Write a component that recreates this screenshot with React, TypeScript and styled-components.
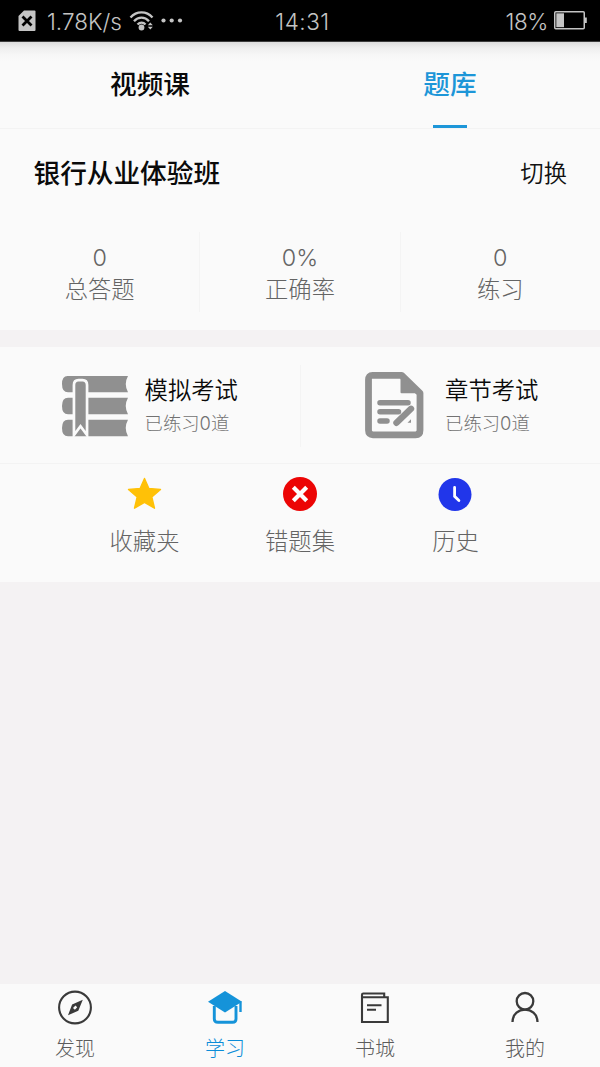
import React from "react";
import styled, { createGlobalStyle } from "styled-components";

const GlobalStyle = createGlobalStyle`
  * { box-sizing: border-box; }
  body {
    margin: 0;
    background: #f4f2f3;
    font-family: "Noto Sans CJK SC", "Noto Sans", sans-serif;
    font-weight: 300;
  }
  svg { display: block; flex: none; }
`;

const Screen = styled.div`
  width: 600px;
  height: 1067px;
  display: flex;
  flex-direction: column;
  background: #f4f2f3;
`;

const StatusBar = styled.header`
  height: 42px;
  flex: none;
  display: grid;
  grid-template-columns: 1fr auto 1fr;
  align-items: center;
  padding: 0 13px 0 18px;
  background: #000;
  border-bottom: 1px solid #3c3c3c;
  color: #c4c4c4;
`;

const StatusGroup = styled.div<{ $end?: boolean }>`
  display: flex;
  align-items: center;
  gap: 6px;
  justify-content: ${(p) => (p.$end ? "flex-end" : "flex-start")};
`;

const StatusText = styled.span<{ $spacing?: number }>`
  font-family: Inter, sans-serif;
  font-size: 22.5px;
  line-height: 39px;
  padding-top: 2px;
  letter-spacing: ${(p) => p.$spacing ?? 0}px;
`;

const NetSpeed = styled(StatusText)`
  width: 76px;
  margin-left: 5px;
  white-space: nowrap;
`;

const Tabs = styled.nav`
  height: 87px;
  flex: none;
  display: flex;
  background: linear-gradient(#dcdcdc 0, #eeeeee 6px, #f7f7f7 13px, #fafafa 20px);
  border-bottom: 1px solid #f3f3f3;
`;

const Tab = styled.button<{ $active?: boolean }>`
  flex: 1;
  border: 0;
  padding: 21px 0 0;
  background: none;
  display: flex;
  flex-direction: column;
  align-items: center;
  justify-content: space-between;
  font: 500 26.67px/40px "Noto Sans CJK SC", sans-serif;
  color: ${(p) => (p.$active ? "#1d96d8" : "#0a0a0a")};
  &::after {
    content: "";
    width: 34px;
    height: 3px;
    background: ${(p) => (p.$active ? "#1d96d8" : "transparent")};
  }
`;

const Summary = styled.section`
  height: 201px;
  flex: none;
  background: #fafafa;
`;

const CourseRow = styled.div`
  height: 103px;
  padding: 23px 33px 0 33.5px;
  display: flex;
  justify-content: space-between;
`;

const CourseTitle = styled.h1`
  margin: 0;
  font-size: 26.67px;
  font-weight: 500;
  line-height: 40px;
  color: #0a0a0a;
`;

const Switch = styled.span`
  font-size: 23.33px;
  font-weight: 350;
  line-height: 40px;
  color: #111;
`;

const Stats = styled.div`
  display: flex;
  height: 80px;
`;

const Stat = styled.div`
  flex: 1;
  display: flex;
  flex-direction: column;
  align-items: center;
  padding-top: 10px;
  font-size: 23.33px;
  line-height: 31px;
  color: #646464;
  & + & { border-left: 1px solid #f4f4f4; }
`;

const Digits = styled.span`
  font-family: Inter, sans-serif;
`;

const Exams = styled.section`
  height: 117px;
  flex: none;
  margin-top: 17px;
  padding: 18px 0 16px;
  display: flex;
  background: #fafafa;
  border-bottom: 1px solid #f3f3f3;
`;

const Exam = styled.div`
  flex: 1;
  display: flex;
  justify-content: center;
  padding-top: 6px;
  gap: 15px;
  & + & { border-left: 1px solid #f4f4f4; }
`;

const ExamText = styled.div`
  display: flex;
  flex-direction: column;
`;

const ExamName = styled.span`
  font-size: 23.33px;
  font-weight: 350;
  line-height: 36px;
  color: #0a0a0a;
`;

const ExamCount = styled.span`
  font-size: 18.33px;
  line-height: 31px;
  color: #727272;
`;

const Shortcuts = styled.section`
  height: 118px;
  flex: none;
  display: grid;
  grid-template-columns: repeat(3, 155.5px);
  justify-content: center;
  background: #fafafa;
`;

const Shortcut = styled.div`
  display: flex;
  flex-direction: column;
  align-items: center;
  padding-top: 12px;
  gap: 11px;
  font-size: 23.33px;
  line-height: 34px;
  color: #646464;
`;

const BottomNav = styled.nav`
  margin-top: auto;
  height: 83px;
  flex: none;
  display: flex;
  background: #fafafa;
`;

const NavItem = styled.div<{ $active?: boolean }>`
  flex: 1;
  display: flex;
  flex-direction: column;
  align-items: center;
  padding-top: 5px;
  gap: 6px;
  font-size: 20px;
  line-height: 30px;
  color: ${(p) => (p.$active ? "#0a8cd8" : "#5c5c5c")};
`;

const SimIcon = () => (
  <svg width="18" height="22" viewBox="0 0 18 22">
    <path d="M6 .5H16.500a1 1 0 0 1 1 1V20a1 1 0 0 1-1 1H1.500a1 1 0 0 1-1-1V6z" fill="#c4c4c4" />
    <path d="M4.500 6.500l9 9M13.500 6.500l-9 9" stroke="#000" strokeWidth="2.800" />
  </svg>
);

const WifiIcon = () => (
  <svg width="26" height="20" viewBox="0 0 25 20" fill="none" stroke="#c4c4c4" strokeWidth="2.300">
    <path d="M1 6.500C7-.3 17-.3 23 6.500M4.500 10.200c4.200-4.700 10.800-4.700 15 0M8 13.500c2.500-2.600 5.800-2.600 8 0" />
    <circle cx="12" cy="16.500" r="2.900" fill="#c4c4c4" stroke="none" />
    <path d="M18.300 14.300l2.500-2.800 2.500 2.800zM18.300 15.800l2.500 2.800 2.500-2.800z" fill="#c4c4c4" stroke="none" />
  </svg>
);

const DotsIcon = () => (
  <svg width="22" height="5" viewBox="0 0 22 5" fill="#c4c4c4">
    <circle cx="2.500" cy="2.500" r="2.100" />
    <circle cx="10.700" cy="2.500" r="2.100" />
    <circle cx="19" cy="2.500" r="2.100" />
  </svg>
);

const BatteryIcon = () => (
  <svg width="33" height="19" viewBox="0 0 33 19">
    <rect x=".75" y=".75" width="29.500" height="17" rx="1" fill="none" stroke="#c4c4c4" strokeWidth="1.500" />
    <rect x="2.300" y="2.300" width="7.700" height="13.900" fill="#c4c4c4" />
    <rect x="31" y="6.500" width="1.800" height="5.500" fill="#c4c4c4" />
  </svg>
);

const BooksIcon = () => (
  <svg width="68" height="68" viewBox="1 -3 68 68" fill="#909090">
    <path d="M7 2H67Q62.500 10 67 18.300H7Q1 18.300 1 10T7 2z" />
    <path d="M7 23.700H67Q62.500 31.700 67 40.300H7Q1 40.300 1 32T7 23.700z" />
    <path d="M7 45.700H67Q62.500 53.700 67 62.300H7Q1 62.300 1 54T7 45.700z" />
    <path
      d="M14.300 57V11Q14.300 7.500 17.500 7.500H21.500Q24.700 7.500 24.700 11V57L19.500 50z"
      stroke="#fafafa"
      strokeWidth="5.400"
    />
    <path d="M14.300 57V11Q14.300 7.500 17.500 7.500H21.500Q24.700 7.500 24.700 11V57L19.500 50z" />
  </svg>
);

const PaperIcon = () => (
  <svg width="68" height="68" viewBox="-2.500 -.3 68 68" fill="none" stroke="#909090" strokeLinejoin="round">
    <path d="M8 4H37L55.500 22V59Q55.500 63.500 51 63.500H8.500Q4 63.500 4 59V8.500Q4 4 8 4z" strokeWidth="6.800" />
    <path d="M37 3V21H56z" fill="#909090" strokeWidth="2" />
    <g strokeWidth="5.500" strokeLinecap="round">
      <path d="M15.500 31.500H43.500M15.500 40.500H34M15.500 49.700H22.500" />
      <path d="M46.500 37.500L32 51.500" strokeWidth="6.400" />
    </g>
    <path d="M43 51.500l3.500-3.500v3.500z" fill="#909090" stroke="none" />
  </svg>
);

const StarIcon = () => (
  <svg width="36" height="36" viewBox="0 0 36 36">
    <path
      d="M17.500 2.500L21.900 12.500 33.500 13.500 24.800 21 27.500 32.200 17.500 26.300 7.500 32.200 10.200 21 1.500 13.500 13.100 12.500z"
      fill="#ffc107"
      stroke="#ffc107"
      strokeWidth="1.400"
      strokeLinejoin="round"
    />
  </svg>
);

const WrongIcon = () => (
  <svg width="36" height="36" viewBox="0 0 36 36">
    <circle cx="18" cy="18" r="17" fill="#ec0505" />
    <path d="M12.800 12.800l10.400 10.400M23.200 12.800L12.800 23.200" stroke="#fff" strokeWidth="4.200" strokeLinecap="square" />
  </svg>
);

const HistoryIcon = () => (
  <svg width="36" height="36" viewBox="0 0 36 36">
    <circle cx="17" cy="18.500" r="16.500" fill="#2136ea" />
    <path d="M16.600 11.500v8.800l4.300 4.200" fill="none" stroke="#fff" strokeWidth="2.800" strokeLinecap="round" />
  </svg>
);

const CompassIcon = () => (
  <svg width="38" height="38" viewBox="0 0 38 38">
    <circle cx="19" cy="18.500" r="15.900" fill="none" stroke="#3a3a3a" strokeWidth="2.100" />
    <path
      d="M26.800 10.800L22.300 21.800 12 26.200 16.100 15.500z M19.500 16.500L17 19 18.900 20.800 21.200 18.300z"
      fill="#3a3a3a"
      fillRule="evenodd"
    />
  </svg>
);

const CapIcon = () => (
  <svg width="38" height="38" viewBox="0 0 38 38">
    <path d="M8.300 17V30Q8.300 33.300 12 33.300H26.500Q30 33.300 30 30V17" fill="none" stroke="#1593d9" strokeWidth="2.900" />
    <path d="M19 2L36 12.700 19 23.500 2 12.700z" fill="#1593d9" />
    <path d="M34.500 12.500V23" stroke="#1593d9" strokeWidth="2.400" />
  </svg>
);

const BookIcon = () => (
  <svg width="38" height="38" viewBox="0 0 38 38" fill="none" stroke="#3a3a3a" strokeWidth="2.100">
    <path d="M6 8.200V5.800Q6 4.500 7.300 4.500H28.200V8.200M6 8.200H31.800V33H6z" />
    <path d="M11 16.200H25.500M11 20.700H20" />
  </svg>
);

const PersonIcon = () => (
  <svg width="38" height="38" viewBox="0 0 38 38" fill="none" stroke="#3a3a3a" strokeWidth="2.300">
    <circle cx="19" cy="12.300" r="8.300" />
    <path d="M6.500 33C7 16.500 31 16.500 31.500 33" />
  </svg>
);

const stats = [
  ["0", "总答题"],
  ["0%", "正确率"],
  ["0", "练习"],
];

const exams = [
  { name: "模拟考试", Icon: BooksIcon },
  { name: "章节考试", Icon: PaperIcon },
];

const shortcuts = [
  { label: "收藏夹", Icon: StarIcon },
  { label: "错题集", Icon: WrongIcon },
  { label: "历史", Icon: HistoryIcon },
];

const navItems = [
  { label: "发现", Icon: CompassIcon },
  { label: "学习", Icon: CapIcon, active: true },
  { label: "书城", Icon: BookIcon },
  { label: "我的", Icon: PersonIcon },
];

export default function App() {
  return (
    <Screen>
      <GlobalStyle />
      <StatusBar>
        <StatusGroup>
          <SimIcon />
          <NetSpeed>1.78K/s</NetSpeed>
          <WifiIcon />
          <DotsIcon />
        </StatusGroup>
        <StatusText $spacing={0.5}>14:31</StatusText>
        <StatusGroup $end>
          <StatusText $spacing={-0.4}>18%</StatusText>
          <BatteryIcon />
        </StatusGroup>
      </StatusBar>
      <Tabs>
        <Tab>视频课</Tab>
        <Tab $active>题库</Tab>
      </Tabs>
      <Summary>
        <CourseRow>
          <CourseTitle>银行从业体验班</CourseTitle>
          <Switch>切换</Switch>
        </CourseRow>
        <Stats>
          {stats.map(([value, label]) => (
            <Stat key={label}>
              <Digits>{value}</Digits>
              <span>{label}</span>
            </Stat>
          ))}
        </Stats>
      </Summary>
      <Exams>
        {exams.map(({ name, Icon }) => (
          <Exam key={name}>
            <Icon />
            <ExamText>
              <ExamName>{name}</ExamName>
              <ExamCount>
                已练习<Digits>0</Digits>道
              </ExamCount>
            </ExamText>
          </Exam>
        ))}
      </Exams>
      <Shortcuts>
        {shortcuts.map(({ label, Icon }) => (
          <Shortcut key={label}>
            <Icon />
            <span>{label}</span>
          </Shortcut>
        ))}
      </Shortcuts>
      <BottomNav>
        {navItems.map(({ label, Icon, active }) => (
          <NavItem key={label} $active={active}>
            <Icon />
            <span>{label}</span>
          </NavItem>
        ))}
      </BottomNav>
    </Screen>
  );
}
